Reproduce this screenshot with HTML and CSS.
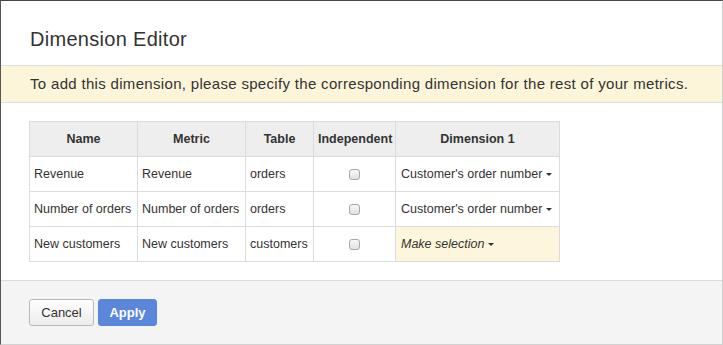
FILE: index.html
```html
<!DOCTYPE html>
<html lang="en">
<head>
    <meta charset="UTF-8">
    <meta name="viewport" content="width=device-width, initial-scale=1.0">
    <title>Dimension Editor</title>
    <link rel="stylesheet" href="styles.css">
</head>
<body>

    <div class="modal">
        <div class="modal-header">
            <h2>Dimension Editor</h2>
        </div>

        <div class="notice">
            To add this dimension, please specify the corresponding dimension for the rest of your metrics.
        </div>

        <div class="modal-body">
            <table class="dim-table">
                <thead>
                    <tr>
                        <th class="col-name">Name</th>
                        <th class="col-metric">Metric</th>
                        <th class="col-table">Table</th>
                        <th class="col-indep">Independent</th>
                        <th class="col-dim">Dimension 1</th>
                    </tr>
                </thead>
                <tbody>
                    <tr>
                        <td>Revenue</td>
                        <td>Revenue</td>
                        <td>orders</td>
                        <td class="center"><input type="checkbox" class="check"></td>
                        <td><span class="dropdown">Customer's order number</span></td>
                    </tr>
                    <tr>
                        <td>Number of orders</td>
                        <td>Number of orders</td>
                        <td>orders</td>
                        <td class="center"><input type="checkbox" class="check"></td>
                        <td><span class="dropdown">Customer's order number</span></td>
                    </tr>
                    <tr>
                        <td>New customers</td>
                        <td>New customers</td>
                        <td>customers</td>
                        <td class="center"><input type="checkbox" class="check"></td>
                        <td class="pending"><span class="dropdown">Make selection</span></td>
                    </tr>
                </tbody>
            </table>
        </div>

        <div class="modal-footer">
            <button class="btn btn-cancel">Cancel</button>
            <button class="btn btn-apply">Apply</button>
        </div>
    </div>

</body>
</html>
```

FILE: styles.css
```css
body {
    margin: 0;
    padding: 0;
    font-family: 'Liberation Sans', Arial, sans-serif;
    color: #333;
    background: #fff;
}
.modal {
    width: 723px;
    height: 345px;
    box-sizing: border-box;
    border-top: 1px solid #444;
    border-left: 1px solid #555;
    border-right: 1px solid #d2d2d2;
    border-bottom: 1px solid #d2d2d2;
    display: flex;
    flex-direction: column;
    background: #fff;
}
.modal-header {
    padding: 26px 29px 13px;
    border-bottom: 1px solid #dcdcdc;
}
.modal-header h2 {
    margin: 0;
    font-size: 20px;
    line-height: 25px;
    font-weight: normal;
    letter-spacing: 0.3px;
    color: #333;
}
/* Yellow warning strip */
.notice {
    background: #fdf5da;
    border-bottom: 1px solid #dcdcdc;
    padding: 9px 29px;
    font-size: 15px;
    line-height: 18px;
    letter-spacing: 0.32px;
    color: #333;
}
.modal-body {
    flex: 1;
    padding: 18px 28px 0;
}
.dim-table {
    border-collapse: collapse;
    table-layout: fixed;
    width: 530px;
    font-size: 12.5px;
}
.dim-table th,
.dim-table td {
    border: 1px solid #dcdcdc;
    height: 35px;
    padding: 0 4px;
    box-sizing: border-box;
    white-space: nowrap;
    overflow: visible;
}
.dim-table th {
    background: #eeeeee;
    font-weight: bold;
    text-align: center;
}
.col-name { width: 108px; }
.col-metric { width: 108px; }
.col-table { width: 68px; }
.col-indep { width: 82px; }
.col-dim { width: 164px; }
.dim-table td.center {
    text-align: center;
}
.dim-table td.pending {
    background: #fef6dc;
    font-style: italic;
}
.dropdown {
    padding-left: 1px;
}
.dropdown::after {
    content: "";
    display: inline-block;
    margin-left: 4px;
    vertical-align: middle;
    border-left: 3px solid transparent;
    border-right: 3px solid transparent;
    border-top: 3px solid #333;
}
.check {
    appearance: none;
    -webkit-appearance: none;
    width: 11px;
    height: 11px;
    margin: 0;
    vertical-align: middle;
    border: 1px solid #a8a8a8;
    border-radius: 3px;
    background: linear-gradient(#f7f7f7, #e2e2e2);
}
.modal-footer {
    background: #f4f4f4;
    border-top: 1px solid #dcdcdc;
    padding: 18px 28px;
    height: 64px;
    box-sizing: border-box;
    display: flex;
    gap: 4px;
    align-items: flex-start;
}
.btn {
    height: 27px;
    font-family: inherit;
    font-size: 13px;
    border-radius: 3px;
    cursor: pointer;
    padding: 0;
}
.btn-cancel {
    width: 65px;
    background: linear-gradient(#ffffff, #ececec);
    border: 1px solid #b9b9b9;
    color: #333;
}
.btn-apply {
    width: 59px;
    background: #5a86dc;
    border: 1px solid #5a86dc;
    color: #fff;
    font-weight: bold;
}
```
